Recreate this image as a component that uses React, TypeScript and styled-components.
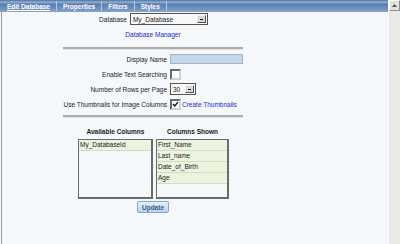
import styled, { createGlobalStyle } from "styled-components";

const GlobalStyle = createGlobalStyle`
  html, body {
    margin: 0;
    padding: 0;
    width: 400px;
    height: 244px;
    overflow: hidden;
    background: #f4f8fb;
    font-family: "Liberation Sans", Arial, sans-serif;
    font-size: 6.5px;
    color: #1a1a1a;
  }
`;

const Frame = styled.div`
  display: flex;
  width: 400px;
  height: 244px;
`;

const Main = styled.div`
  flex: 1;
  display: flex;
  flex-direction: column;
`;

const TabBar = styled.div`
  display: flex;
  align-items: center;
  height: 12px;
  padding-left: 1px;
  background: linear-gradient(
    to bottom,
    #4f72a3 0%,
    #96b0d2 18%,
    #5a7eb2 34%,
    #6f90bf 70%,
    #87a4cb 100%
  );
`;

const Tab = styled.div<{ $active?: boolean }>`
  display: flex;
  align-items: center;
  height: 10px;
  padding: 0 6px;
  border-right: 1px solid #b4c8e2;
  color: #ffffff;
  font-weight: bold;
  text-decoration: ${(p) => (p.$active ? "underline" : "none")};
`;

const Content = styled.div`
  flex: 1;
  margin-left: 1px;
  border-left: 1px solid #9a9a9a;
  background: #f4f8fb;
  padding-left: 61px;
`;

const Form = styled.div`
  width: 180px;
  display: flex;
  flex-direction: column;
  align-items: center;
`;

const DbRow = styled.div`
  display: flex;
  align-items: center;
  gap: 3px;
  margin-top: 1px;
  margin-left: 1px;
`;

const SelectBox = styled.div<{ $w: number }>`
  display: flex;
  align-items: center;
  justify-content: space-between;
  width: ${(p) => p.$w}px;
  height: 12px;
  box-sizing: border-box;
  border: 1px solid #555;
  background: #f8f8f8;
  padding-left: 2px;
`;

const DropButton = styled.div`
  display: flex;
  align-items: center;
  justify-content: center;
  width: 9px;
  height: 8px;
  margin-right: 1px;
  box-sizing: border-box;
  border: 1px solid;
  border-color: #eee #555 #555 #eee;
  background: #d8d8d8;
  &::after {
    content: "";
    width: 3px;
    height: 1px;
    background: #111;
  }
`;

const Link = styled.span`
  color: #2626d8;
`;

const ManagerLink = styled(Link)`
  margin-top: 6px;
  line-height: 8px;
`;

const Rule = styled.div<{ $top: number }>`
  align-self: stretch;
  height: 2px;
  margin-top: ${(p) => p.$top}px;
  background: #adadad;
  border-bottom: 1px solid #e4e4e4;
`;

const Fields = styled.div`
  align-self: stretch;
  display: grid;
  grid-template-columns: 104px 1fr;
  column-gap: 3px;
  row-gap: 3px;
  align-items: center;
  margin-top: 3px;
`;

const Label = styled.div`
  text-align: right;
  white-space: nowrap;
`;

const Control = styled.div`
  display: flex;
  align-items: center;
  gap: 1px;
  height: 12px;
`;

const TextInput = styled.div`
  width: 73px;
  height: 10px;
  box-sizing: border-box;
  border: 1px solid #9fb4c8;
  background: #c6d8ea;
`;

const Check = styled.div`
  position: relative;
  width: 11px;
  height: 11px;
  box-sizing: border-box;
  border: 2px solid;
  border-color: #6a6a6a #d0d0d0 #d0d0d0 #6a6a6a;
  background: #ffffff;
`;

const Tick = styled.svg`
  position: absolute;
  left: 0;
  top: 0;
`;

const ColumnsArea = styled.div`
  display: flex;
  gap: 3px;
  margin-top: 10px;
  margin-left: 1px;
`;

const Column = styled.div`
  display: flex;
  flex-direction: column;
  align-items: center;
  gap: 3px;
`;

const ColumnTitle = styled.div`
  font-weight: bold;
  line-height: 8px;
`;

const ListBox = styled.div<{ $w: number }>`
  width: ${(p) => p.$w}px;
  height: 60px;
  box-sizing: border-box;
  border: 1px solid #6b6b6b;
  border-width: 1px 2px 2px 1px;
  background: #f4f8fb;
`;

const ListItem = styled.div`
  height: 11px;
  box-sizing: border-box;
  padding-left: 1px;
  line-height: 10px;
  background: #ecf3df;
  border-bottom: 1px solid #cfdfb8;
`;

const UpdateButton = styled.div`
  margin-top: 2px;
  width: 32px;
  height: 12px;
  box-sizing: border-box;
  display: flex;
  align-items: center;
  justify-content: center;
  border: 1px solid #86a6cf;
  border-radius: 2px;
  background: linear-gradient(to bottom, #e6eff9, #bcd1ea);
  color: #3b5b8c;
  font-weight: bold;
`;

const ScrollBar = styled.div`
  width: 12px;
  height: 244px;
  box-sizing: border-box;
  border-left: 1px solid #fbfbfa;
  background: #ebe9e5;
`;

const ScrollUp = styled.div`
  width: 11px;
  height: 11px;
  box-sizing: border-box;
  display: flex;
  align-items: center;
  justify-content: center;
  border: 1px solid;
  border-color: #fff #8e8e8e #8e8e8e #fff;
  background: #e4e2dd;
`;

const available = ["My_DatabaseId"];
const shown = ["First_Name", "Last_name", "Date_of_Birth", "Age"];

export default function App() {
  return (
    <Frame>
      <GlobalStyle />
      <Main>
        <TabBar>
          <Tab $active>Edit Database</Tab>
          <Tab>Properties</Tab>
          <Tab>Filters</Tab>
          <Tab>Styles</Tab>
        </TabBar>
        <Content>
          <Form>
            <DbRow>
              <span>Database</span>
              <SelectBox $w={78}>
                My_Database
                <DropButton />
              </SelectBox>
            </DbRow>
            <ManagerLink>Database Manager</ManagerLink>
            <Rule $top={8} />
            <Fields>
              <Label>Display Name</Label>
              <Control>
                <TextInput />
              </Control>
              <Label>Enable Text Searching</Label>
              <Control>
                <Check />
              </Control>
              <Label>Number of Rows per Page</Label>
              <Control>
                <SelectBox $w={26}>
                  30
                  <DropButton />
                </SelectBox>
              </Control>
              <Label>Use Thumbnails for Image Columns</Label>
              <Control>
                <Check>
                  <Tick width="7" height="7" viewBox="0 0 7 7">
                    <path d="M1 3 L2.8 5 L6 1" fill="none" stroke="#111" strokeWidth="1.3" />
                  </Tick>
                </Check>
                <Link>Create Thumbnails</Link>
              </Control>
            </Fields>
            <Rule $top={5} />
            <ColumnsArea>
              <Column>
                <ColumnTitle>Available Columns</ColumnTitle>
                <ListBox $w={75}>
                  {available.map((c) => (
                    <ListItem key={c}>{c}</ListItem>
                  ))}
                </ListBox>
              </Column>
              <Column>
                <ColumnTitle>Columns Shown</ColumnTitle>
                <ListBox $w={73}>
                  {shown.map((c) => (
                    <ListItem key={c}>{c}</ListItem>
                  ))}
                </ListBox>
              </Column>
            </ColumnsArea>
            <UpdateButton>Update</UpdateButton>
          </Form>
        </Content>
      </Main>
      <ScrollBar>
        <ScrollUp>
          <svg width="5" height="3" viewBox="0 0 5 3">
            <path d="M0 3 L2.5 0 L5 3 Z" fill="#555" />
          </svg>
        </ScrollUp>
      </ScrollBar>
    </Frame>
  );
}
